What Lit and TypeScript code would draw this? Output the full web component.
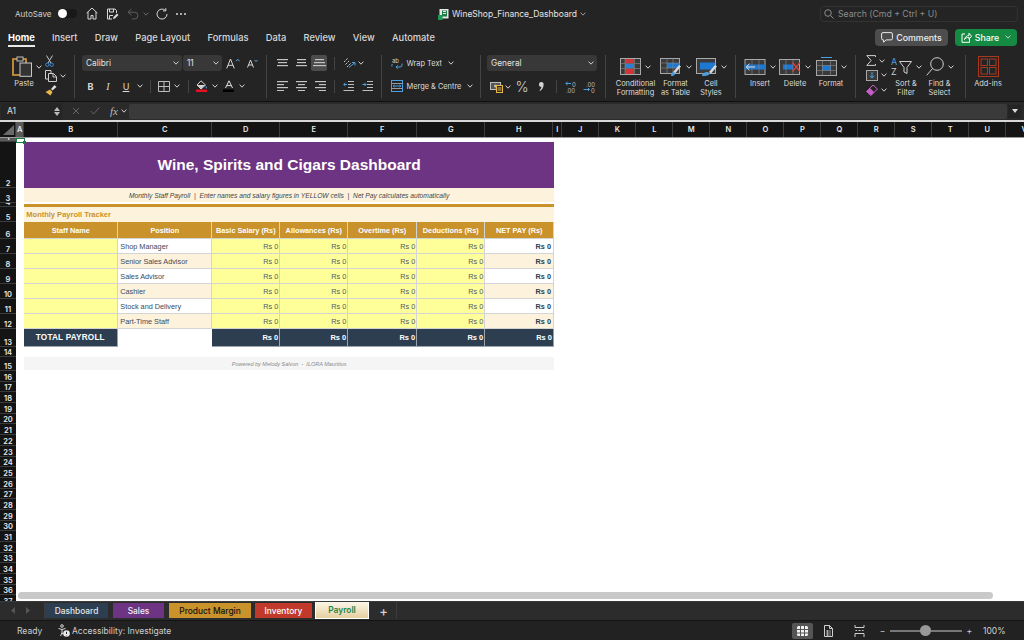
import { LitElement, html, svg, css } from "lit";
import { customElement } from "lit/decorators.js";

const chev = html`<svg class="chev" width="6" height="4" viewBox="0 0 6 4"><path d="M.6.6 3 3.2 5.4.6" fill="none" stroke="#d0d0d0" stroke-width="1"/></svg>`;

const ic = {
  home: html`<svg width="12" height="13" viewBox="0 0 12 13" fill="none" stroke="#d8d8d8"><path d="M.7 6 6 1l5.300 5M2 5v7h3V8.500h2V12h3V5"/></svg>`,
  save: html`<svg width="13" height="12" viewBox="0 0 13 12" fill="none" stroke="#d8d8d8"><path d="M10.500 5V2.500L9 1H1.500v10H6M3.500 1v3h4V1M3.500 11V7.500H7"/><path d="M7 11l.5-2 3.500-3.500 1.500 1.500L9 10.500z" fill="#d8d8d8" stroke="none"/></svg>`,
  undo: html`<svg width="12" height="12" viewBox="0 0 12 12" fill="none" stroke="#5f5f5f"><path d="M4.500 1 1 4.200l3.500 3M1 4.200h6.500a3.400 3.400 0 0 1 0 6.800H5"/></svg>`,
  redo: html`<svg width="12" height="12" viewBox="0 0 12 12" fill="none" stroke="#d8d8d8"><path d="M9.500 2.500A5 5 0 1 0 11 6M9.800.2v2.700H7"/></svg>`,
  more: html`<svg width="10" height="2" viewBox="0 0 10 2" fill="#d8d8d8"><circle cx="1" cy="1" r="1"/><circle cx="5" cy="1" r="1"/><circle cx="9" cy="1" r="1"/></svg>`,
  doc: html`<svg width="11" height="12" viewBox="0 0 11 12"><rect x="1.500" y="1" width="9" height="9.500" fill="#e6e6e6"/><rect x="4" y="2.500" width="5" height="6" fill="#1f7a45"/><path d="M0 7h4.500v5H0z" fill="#1d9a55"/><path d="M5 3.500h3M5 5.500h3" stroke="#e6e6e6"/></svg>`,
  search: html`<svg width="10" height="10" viewBox="0 0 10 10" fill="none" stroke="#8c8c8c"><circle cx="4" cy="4" r="3.300"/><path d="M6.500 6.500 9.500 9.500"/></svg>`,
  comment: html`<svg width="12" height="11" viewBox="0 0 12 11" fill="none" stroke="#e8e8e8"><path d="M2 .6h8A1.400 1.400 0 0 1 11.400 2v4.500A1.400 1.400 0 0 1 10 7.900H5L2.600 10.300V7.900H2A1.400 1.400 0 0 1 .6 6.500V2A1.400 1.400 0 0 1 2 .6z"/></svg>`,
  share: html`<svg width="11" height="11" viewBox="0 0 11 11" fill="none" stroke="#fff"><path d="M4 2H1v8.300h7.500V7"/><path d="M3.500 7.500C4 5 6 3.500 8 3.500V1.200l2.500 3-2.500 3V5.300C6 5.300 4.500 6 3.500 7.500z"/></svg>`,
  paste: html`<svg width="21" height="21" viewBox="0 0 21 21" fill="none"><path d="M6 3H1v16h8M10 3h4v4" stroke="#e3a23c" stroke-width="1.600"/><rect x="5" y="1" width="6" height="4" stroke="#bdbdbd" fill="#2a2a2a"/><rect x="8" y="7" width="11.500" height="13.300" stroke="#c8c8c8" fill="#333"/></svg>`,
  cut: html`<svg width="9" height="12" viewBox="0 0 9 12" fill="none"><path d="M1.500 .5 6 8M7.500 .5 3 8" stroke="#c8c8c8"/><circle cx="2.300" cy="9.700" r="1.700" stroke="#3a8fd8"/><circle cx="6.700" cy="9.700" r="1.700" stroke="#3a8fd8"/></svg>`,
  copy: html`<svg width="12" height="12" viewBox="0 0 12 12" fill="none" stroke="#cfcfcf"><path d="M3 9H.5V.5H6V3"/><path d="M3.500 3.500h5l3 3v5h-8z"/><path d="M8 3.500V7h3.500"/></svg>`,
  painter: html`<svg width="12" height="12" viewBox="0 0 12 12"><path d="M.5 8 5 5.500 7.500 8l-2 3.500z" fill="#e8b74a"/><path d="M6 5l3.500-4L11.500 3 7.500 6.500z" fill="#ddd"/></svg>`,
  aUp: html`<svg width="14" height="11" viewBox="0 0 14 11" fill="none"><path d="M.7 10.500 4.500 1l3.800 9.500M2 7.300h5" stroke="#d8d8d8"/><path d="M10 3.300l1.800-2 1.800 2" stroke="#5aa7e0"/></svg>`,
  aDown: html`<svg width="11" height="9" viewBox="0 0 11 9" fill="none"><path d="M.5 8.500 3.500 1l3 7.500M1.600 6h3.800" stroke="#d8d8d8"/><path d="M7.500 1l1.500 1.600L10.500 1" stroke="#5aa7e0"/></svg>`,
  border: html`<svg width="12" height="11" viewBox="0 0 12 11" fill="none" stroke="#bdbdbd"><path d="M.5.500h11v10H.5zM6 .5v10M.5 5.500h11"/></svg>`,
  fill: html`<svg width="12" height="12" viewBox="0 0 12 12"><path d="M5 .8 9.500 5 5 9 1 5z" fill="none" stroke="#d8d8d8"/><path d="M1.500 5h7.500L5 8.500z" fill="#d8d8d8"/><path d="M10 6c1 1.300 1.200 2 .5 2.500S9.200 7.500 10 6z" fill="#4aa0e0"/><rect y="9.500" width="11" height="2.500" fill="#e81123"/></svg>`,
  fontColor: html`<svg width="12" height="12" viewBox="0 0 12 12"><path d="M2.500 8 6 .8 9.500 8M3.800 5.600h4.400" fill="none" stroke="#e0e0e0"/><rect y="9.500" width="11" height="2.500" fill="#000"/></svg>`,
  orient: html`<svg width="13" height="12" viewBox="0 0 13 12" fill="none"><path d="M1 5l4-4M2.500 7.500l4-4M4 10l4-4" stroke="#cfcfcf" stroke-dasharray="2 1"/><path d="M6 10.500l6-5M12 8.500V5.500H9" stroke="#4aa0e0"/></svg>`,
  indentL: html`<svg width="11" height="10" viewBox="0 0 11 10" fill="none"><path d="M5 .5h6M5 3.500h6M5 6.500h6M.5 9.500h10.500" stroke="#bdbdbd"/><path d="M4 3.500H.7M2.300 2 .7 3.500 2.300 5" stroke="#4aa0e0"/></svg>`,
  indentR: html`<svg width="11" height="10" viewBox="0 0 11 10" fill="none"><path d="M5 .5h6M5 3.500h6M5 6.500h6M.5 9.500h10.500" stroke="#bdbdbd"/><path d="M.5 3.500H4M2.500 2 4 3.500 2.500 5" stroke="#4aa0e0"/></svg>`,
  wrap: html`<svg width="12" height="12" viewBox="0 0 12 12" fill="none"><text x="1" y="5.500" fill="#cfcfcf" font-size="6" font-family="Inter">ab</text><path d="M1.500 7a2 2 0 0 0-.5 2.500M11 6.500v1.500a2 2 0 0 1-2 2H5M6.800 8.300 5 10l1.800 1.700" stroke="#4aa0e0"/></svg>`,
  merge: html`<svg width="12" height="12" viewBox="0 0 12 12" fill="none"><rect x=".5" y=".5" width="11" height="11" stroke="#4aa0e0"/><path d="M.5 3.500h11M.5 8.500h11" stroke="#9a9a9a"/><path d="M2 6h8M3.500 4.800 2.200 6l1.300 1.200M8.500 4.800 9.800 6 8.500 7.200" stroke="#4aa0e0"/></svg>`,
  currency: html`<svg width="13" height="12" viewBox="0 0 13 12"><rect x=".5" y="1.500" width="10" height="7" fill="#555" stroke="#bdbdbd"/><circle cx="5.500" cy="5" r="1.500" fill="#bdbdbd"/><rect x="6.500" y="4.500" width="6" height="7" fill="#2a2a2a" stroke="#e8b74a"/><path d="M7.500 7h4M7.500 9h4" stroke="#e8b74a"/></svg>`,
  comma: html`<svg width="5" height="9" viewBox="0 0 5 9"><path d="M2.300 0a2.300 2.300 0 0 1 2.300 2.500C4.600 5.500 3 8 .9 9l-.4-.6C1.700 7.300 2.300 6 2.400 4.800 1 5 0 3.900 0 2.400A2.300 2.300 0 0 1 2.300 0z" fill="#d4d4d4"/></svg>`,
  decUp: html`<svg width="13" height="12" viewBox="0 0 13 12" fill="none"><path d="M6 2.500H.8M2.500 1 .8 2.500 2.500 4" stroke="#4aa0e0"/><text x="7" y="5.500" fill="#bdbdbd" font-size="6" font-family="Inter">0</text><text x="1" y="11.500" fill="#bdbdbd" font-size="6" font-family="Inter">.00</text></svg>`,
  decDown: html`<svg width="13" height="12" viewBox="0 0 13 12" fill="none"><text x="3" y="5.500" fill="#bdbdbd" font-size="6" font-family="Inter">.00</text><path d="M.5 8.500h6M5 7l1.500 1.500L5 10" stroke="#4aa0e0"/><text x="8" y="11.500" fill="#bdbdbd" font-size="6" font-family="Inter">0</text></svg>`,
  condFmt: html`<svg width="21" height="17" viewBox="0 0 21 17"><rect x=".5" y=".5" width="20" height="16" fill="#3a3a3a" stroke="#a8a8a8"/><path d="M5 1h9v4H5z" fill="#d13438"/><path d="M5 6h9v4H5z" fill="#2f7fd0"/><path d="M5 11h9v5H5z" fill="#d13438"/><path d="M1 5.500h19M1 10.500h19M5 1v15M14.500 1v15" stroke="#8a8a8a" stroke-width=".6"/></svg>`,
  fmtTable: html`<svg width="22" height="18" viewBox="0 0 22 18" fill="none"><rect x=".5" y=".5" width="19" height="15" fill="#3a3a3a" stroke="#a8a8a8"/><path d="M7 5h12.500v5H7z" fill="#1e78d0"/><path d="M.5 5h19M.5 10h19M7 .5v15M13 .5v15" stroke="#8a8a8a" stroke-width=".6"/><path d="M13 14l6-7 2 1.500-6 7z" fill="#d8d8d8"/><path d="M11 18c0-3 1-4 3-4l1 1.500c0 2-2 2.500-4 2.500z" fill="#4aa0e0"/></svg>`,
  cellStyle: html`<svg width="21" height="18" viewBox="0 0 21 18" fill="none"><rect x=".5" y=".5" width="19" height="15" fill="#3a3a3a" stroke="#a8a8a8"/><path d="M4 4.500h15v7H4z" fill="#1e78d0"/><path d="M13 14l6-7 2 1.500-6 7z" fill="#d8d8d8"/><path d="M6 18c0-3 3-4 6-4l1.500 1.500c0 2-4 2.500-7.500 2.500z" fill="#4aa0e0"/></svg>`,
  insert: html`<svg width="22" height="16" viewBox="0 0 22 16" fill="none"><rect x="1" y=".5" width="20" height="15" fill="#3a3a3a" stroke="#a8a8a8"/><path d="M.5 5.500h21v5H.5z" fill="#1e78d0"/><path d="M11 8H2.500M5.500 4.800 2.200 8l3.300 3.200" stroke="#e8e8e8"/><path d="M8 1v14M15 1v14" stroke="#8a8a8a" stroke-width=".6"/></svg>`,
  del: html`<svg width="22" height="16" viewBox="0 0 22 16" fill="none"><rect x=".5" y=".5" width="20" height="15" fill="#3a3a3a" stroke="#a8a8a8"/><path d="M4 5.500h10v5H4z" fill="#1e78d0"/><path d="M7 1v14M14 1v14" stroke="#8a8a8a" stroke-width=".6"/><path d="M13.500 3.500 21 12.500M21 3.500l-7.500 9" stroke="#e0433a" stroke-width="1.200"/></svg>`,
  format: html`<svg width="21" height="19" viewBox="0 0 21 19" fill="none"><path d="M5 .5h11" stroke="#4aa0e0"/><rect x=".5" y="3.500" width="20" height="15" fill="#3a3a3a" stroke="#a8a8a8"/><path d="M6 8.500h9v5H6z" fill="#1e78d0"/><path d="M.5 8.500h20M.5 13.500h20M6.500 3.500v15M14.500 3.500v15" stroke="#8a8a8a" stroke-width=".6"/></svg>`,
  sum: html`<svg width="10" height="11" viewBox="0 0 10 11" fill="none" stroke="#cfcfcf"><path d="M9.500 2V.6H.8l4.400 4.900-4.400 4.900h8.700V9"/></svg>`,
  fillDown: html`<svg width="12" height="11" viewBox="0 0 12 11" fill="none"><rect x=".5" y=".5" width="11" height="10" fill="#3a3a3a" stroke="#a8a8a8"/><path d="M6 2v6M3.800 5.800 6 8l2.200-2.200" stroke="#4aa0e0"/></svg>`,
  eraser: html`<svg width="12" height="12" viewBox="0 0 12 12"><path d="M.5 7.500 7 1l4.500 4-6.500 6.500z" fill="none" stroke="#c45fc8"/><path d="M.5 7.500 4 4l4 4-3 3.500z" fill="#c45fc8"/></svg>`,
  sort: html`<svg width="21" height="19" viewBox="0 0 21 19" fill="none"><text x="0" y="8" fill="#4aa0e0" font-size="9" font-family="Inter">A</text><text x="0" y="18" fill="#d0d0d0" font-size="9" font-family="Inter">Z</text><path d="M8.500 4.500h12L16 10.500v6l-3-1.500v-4.500z" stroke="#d0d0d0"/></svg>`,
  find: html`<svg width="18" height="19" viewBox="0 0 18 19" fill="none" stroke="#d0d0d0"><circle cx="11" cy="7" r="6.300"/><path d="M6.500 11.500.7 18.300"/></svg>`,
  addins: html`<svg width="21" height="21" viewBox="0 0 21 21" fill="none" stroke="#a8391f"><rect x=".5" y=".5" width="20" height="20"/><rect x="3" y="3" width="6.500" height="6.500"/><rect x="11.500" y="3" width="6.500" height="6.500"/><rect x="3" y="11.500" width="6.500" height="6.500"/><rect x="11.500" y="11.500" width="6.500" height="6.500"/></svg>`,
  access: html`<svg width="12" height="13" viewBox="0 0 12 13" fill="none"><circle cx="4" cy="2" r="1.300" stroke="#d8d8d8"/><path d="M.5 4.500 4 5.500l3.500-1M4 5.500v3M4 8.500 2.500 12M4 8.500l1 2" stroke="#d8d8d8"/><circle cx="8.500" cy="9.500" r="3.300" fill="#e8e8e8"/><path d="M8.500 7.800v2.200M8.500 11v.4" stroke="#222"/></svg>`,
  gridView: html`<svg width="11" height="10" viewBox="0 0 11 10" fill="#f2f2f2"><path d="M0 1.500A1.500 1.500 0 0 1 1.500 0H3v3H0zM4 0h3v3H4zM8 0h1.500A1.500 1.500 0 0 1 11 1.500V3H8zM0 4h3v2.500H0zM4 4h3v2.500H4zM8 4h3v2.500H8zM0 7.500h3V10H1.500A1.500 1.500 0 0 1 0 8.500zM4 7.500h3V10H4zM8 7.500h3v1A1.500 1.500 0 0 1 9.500 10H8z"/></svg>`,
  pageView: html`<svg width="9" height="12" viewBox="0 0 9 12" fill="none" stroke="#cfcfcf"><path d="M.5.500h5l3 3v8h-8zM5.500.500v3h3"/><path d="M2 6h5M2 8h5M2 10h5M3.500 5v6" stroke-width=".7"/></svg>`,
  breakView: html`<svg width="11" height="12" viewBox="0 0 11 12" fill="none" stroke="#cfcfcf"><path d="M1 0v2.500h9V0M1 12V8.500h9V12M1.500 5.500h1.500M4.500 5.500h2M8 5.500h1.500"/></svg>`,
};

// the alignment buttons are just stacks of bars
const bars = (ws: number[], align: "l" | "c" | "r", gap = 3) => {
  const total = Math.max(...ws);
  const h = (ws.length - 1) * gap + 1.2;
  return html`<svg width=${total} height=${h} viewBox="0 0 ${total} ${h}">
    ${ws.map((w, i) => {
      const x = align === "l" ? 0 : align === "c" ? (total - w) / 2 : total - w;
      return svg`<rect x=${x} y=${i * gap} width=${w} height="1.200" fill="#c4c4c4"></rect>`;
    })}
  </svg>`;
};

const rowHeights = [4, 46, 15, 4, 15, 17, 15, 15, 15, 15, 15, 15, 18, 10, 14, ...Array(22).fill(10.7)];
const colLetters = ["A", "B", "C", "D", "E", "F", "G", "H", "I", "J", "K", "L", "M", "N", "O", "P", "Q", "R", "S", "T", "U", "V"];
const positions = ["Shop Manager", "Senior Sales Advisor", "Sales Advisor", "Cashier", "Stock and Delivery", "Part-Time Staff"];
const amounts = ["Basic Salary (Rs)", "Allowances (Rs)", "Overtime (Rs)", "Deductions (Rs)"];
const menu = ["Insert", "Draw", "Page Layout", "Formulas", "Data", "Review", "View", "Automate"];
const sheets = [
  { name: "Dashboard", cls: "navy" },
  { name: "Sales", cls: "purple" },
  { name: "Product Margin", cls: "gold" },
  { name: "Inventory", cls: "red" },
  { name: "Payroll", cls: "current" },
];

@customElement("app-root")
export class AppRoot extends LitElement {
  static styles = css`
    :host {
      display: block;
      width: 1024px;
      height: 640px;
      overflow: hidden;
      font-family: Inter, "Liberation Sans", sans-serif;
      color: #e0e0e0;
      background: #242424;
    }
    * { box-sizing: border-box; }
    svg { display: block; flex: none; }
    .app { display: flex; flex-direction: column; height: 640px; }

    .title {
      height: 27px;
      display: grid;
      grid-template-columns: 1fr auto 1fr;
      align-items: center;
      font-size: 8.500px;
    }
    .quick { display: flex; align-items: center; padding-left: 15px; }
    .quick .label { width: 43px; color: #cfcfcf; font-size: 8.100px; }
    .toggle { width: 19px; height: 9px; border-radius: 5px; background: #181818; margin-right: 9px; }
    .toggle::before { content: ""; display: block; width: 9px; height: 9px; border-radius: 50%; background: #fff; }
    .quick svg { margin-right: 8px; }
    .quick .chev { margin: 0 7px 0 -4px; opacity: .4; }
    .doc { display: flex; align-items: center; gap: 3px; font-size: 8.500px; color: #e4e4e4; }
    .doc .chev { margin-left: 0; opacity: .7; }
    .search {
      justify-self: end;
      margin-right: 6px;
      width: 198px;
      height: 16px;
      display: flex;
      align-items: center;
      gap: 4px;
      padding-left: 3px;
      border: 1px solid #333;
      border-radius: 4px;
      color: #8c8c8c;
      font-size: 8.700px;
    }

    .menu { height: 23px; display: flex; align-items: center; padding: 0 7px 3px 8px; font-size: 9.300px; font-weight: 500; color: #d8d8d8; gap: 17.300px; }
    .menu .home { font-weight: 700; color: #fff; position: relative; }
    .menu .home::after { content: ""; position: absolute; left: 0; right: 0; bottom: -4px; height: 1.500px; background: #e8e8e8; }
    .actions { margin-left: auto; display: flex; gap: 7px; font-weight: 500; font-size: 8.800px; }
    .btn { height: 17px; display: flex; align-items: center; justify-content: center; gap: 3px; border-radius: 4px; color: #eee; }
    .btn.comments { width: 73px; background: #4d4d4d; }
    .btn.share { width: 62px; background: #148a42; color: #fff; }
    .btn .chev { margin-left: 3px; }

    .ribbon { height: 51px; padding: 5px 0 3px; display: flex; font-size: 7.400px; color: #dcdcdc; }
    .group { height: 43px; border-right: 1px solid #444; display: flex; flex: none; }
    .g-clip { width: 75px; padding-left: 12px; }
    .g-font { width: 192px; padding-left: 7px; flex-direction: column; gap: 7px; }
    .g-align { width: 115px; padding-left: 5px; flex-direction: column; gap: 7px; }
    .g-wrap { width: 99px; padding-left: 9px; flex-direction: column; gap: 7px; }
    .g-num { width: 125px; padding-left: 6px; flex-direction: column; gap: 7px; }
    .g-styles { width: 130px; padding-left: 9px; }
    .g-cells { width: 120px; padding-left: 6px; }
    .g-edit { width: 110px; padding-left: 10px; }
    .g-add { width: 59px; border: 0; }

    .paste { width: 33px; display: flex; flex-direction: column; }
    .paste .top { display: flex; align-items: center; gap: 3px; height: 23px; }
    .paste .cap { width: 24px; text-align: center; margin-top: 1px; line-height: 9px; }
    .stack { display: flex; flex-direction: column; justify-content: space-between; height: 41px; }
    .stack > div { display: flex; align-items: center; gap: 3px; }

    .line { height: 16px; display: grid; align-items: center; justify-items: center; }
    .font-top { display: flex; align-items: center; height: 16px; }
    .select { height: 16px; display: flex; align-items: center; justify-content: space-between; padding: 0 3px 0 4px; background: #383838; border-radius: 3px; font-size: 8.300px; color: #e4e4e4; }
    .select.name { width: 100px; margin-right: 1px; }
    .select.size { width: 39px; margin-right: 4px; }
    .select.fmt { width: 110px; }
    .font-top .up { margin-right: 7px; }
    .font-tools { grid-template-columns: 17px 18px 18px 10px 10px 18px 8px 14px 14px 12px 16px 10px; }
    .b { font-weight: 700; font-size: 9px; }
    .i { font-style: italic; font-family: "Liberation Serif", serif; font-size: 10px; }
    .u { text-decoration: underline; font-size: 9px; }
    .vsep { width: 1px; height: 13px; background: #444; }
    .align-top { grid-template-columns: 20px 18px 18px 12px 18px 6px; }
    .align-bottom { grid-template-columns: 20px 18px 20px 8px 20px 18px; }
    .active { width: 16px; height: 16px; background: #4c4c4c; border-radius: 2px; display: flex; align-items: center; justify-content: center; }
    .wrapline { height: 16px; display: flex; align-items: center; gap: 3.500px; }
    .wrapline .chev { margin-left: 2px; }
    .num-tools { grid-template-columns: 18px 6px 22px 16px 14px 16px 20px; }
    .pct { font-size: 14px; font-weight: 300; color: #d0d0d0; }

    .big { display: flex; flex-direction: column; align-items: center; }
    .big .top { height: 23px; display: flex; align-items: center; gap: 4px; }
    .big .cap { margin-top: 1px; text-align: center; line-height: 9px; white-space: pre-line; }
    .w41 { width: 41px; }
    .w39 { width: 39px; }
    .w32 { width: 32px; }
    .w36 { width: 36px; }
    .w34 { width: 34px; }
    .w38 { width: 38px; }
    .w35 { width: 35px; }
    .w44 { width: 44px; }
    .w24 { width: 24px; }

    .formula { height: 19px; border-top: 1px solid #111; display: flex; align-items: center; font-size: 8.500px; background: #2a2a2a; }
    .namebox { width: 61px; height: 17px; margin-left: 1px; padding: 0 2px 0 6px; display: flex; align-items: center; justify-content: space-between; background: #252525; color: #e0e0e0; }
    .step { display: flex; flex-direction: column; gap: 1px; }
    .fx-tools { width: 67px; display: flex; align-items: center; padding-left: 10px; gap: 10px; color: #666; }
    .fx { font-family: "Liberation Serif", serif; font-style: italic; font-size: 11px; color: #bbb; margin-right: -7px; }
    .input { flex: 1; height: 15px; background: #3a3a3a; border-radius: 2px; }
    .fdrop { width: 13px; height: 13px; margin: 0 3px 0 1px; background: #242424; display: flex; align-items: center; justify-content: center; }

    .sheet { flex: 1; min-height: 0; position: relative; overflow: hidden; background: #fff; border-top: 2px solid #d8d8d8; }
    .cols { height: 16px; display: grid; grid-template-columns: 16px 8.300px 94px 94px 68px 68px 69px 68px 68px 9px repeat(13, 37px); background: #141414; border-bottom: 1px solid #9a9a9a; }
    .cols > div { display: flex; align-items: center; justify-content: center; border-right: 1px solid #3c3c3c; font-size: 7.500px; font-weight: 600; color: #e8e8e8; overflow: hidden; }
    .cols .sel { background: #5a5a5a; }
    .cols .corner { background: #141414; position: relative; }
    .corner svg { position: absolute; left: 3px; top: 3px; }
    .body { display: flex; }
    .rows { width: 16px; flex: none; background: #141414; }
    .rows div { overflow: hidden; display: flex; align-items: flex-end; justify-content: center; border-bottom: 1px solid #3c3c3c; font-size: 7.500px; line-height: 6px; font-weight: 600; color: #e8e8e8; }
    .rows div:first-child { background: #5a5a5a; }

    .page { position: relative; flex: 1; padding: 4px 0 0 8.300px; }
    .selbox { position: absolute; left: 0; top: 0; width: 9px; height: 5px; border: 1px solid #1e7a45; }
    .selbox::after { content: ""; position: absolute; right: -2px; bottom: -2px; width: 3px; height: 3px; background: #1e7a45; }
    .paper { display: grid; grid-template-columns: 94px 94px 68px 68px 69px 68px 68.700px; font-family: "Liberation Sans", Arial, sans-serif; width: 529.700px; grid-template-rows: 46px 15px 4px 15px 17px repeat(6, 15px) 18px; font-size: 7.300px; }
    .paper .wide { grid-column: 1 / -1; }
    .banner { background: #6c3483; color: #fff; font-size: 15.500px; font-weight: 700; display: flex; align-items: center; justify-content: center; }
    .note { background: #fdf2dc; font-size: 6.700px; font-style: italic; color: #444; display: flex; align-items: center; justify-content: center; border-bottom: 1px solid #fff; }
    .bar { background: #c9922a; border-top: 1px solid #fff; }
    .section { background: #fdf2dc; color: #c9922a; font-size: 7.500px; font-weight: 700; display: flex; align-items: center; padding-left: 2px; }
    .cell { display: flex; align-items: center; border-right: 1px solid #d4d4d4; border-bottom: 1px solid #d4d4d4; padding: 1px 2px 0; color: #3d4a57; white-space: nowrap; }
    .head { background: #c9922a; color: #fff; font-weight: 700; justify-content: center; padding: 1px 0 0; }
    .input-cell { background: #ffff99; }
    .money { justify-content: flex-end; color: #4d5a68; padding-right: 1px; }
    .net { justify-content: flex-end; font-weight: 700; color: #2c3e50; }
    .odd { background: #fff; }
    .even { background: #fdf2dc; }
    .total { background: #2c3e50; color: #fff; font-weight: 700; font-size: 7.500px; justify-content: flex-end; padding: 0 1px 0 0; border-color: #9aa4ad; }
    .total.label { justify-content: center; font-size: 8.200px; letter-spacing: .2px; }
    .blank { background: #fff; }
    .foot { width: 529.700px; height: 13px; margin-top: 10px; background: #f5f5f5; display: flex; align-items: center; justify-content: center; font-family: "Liberation Sans", Arial, sans-serif; font-size: 5.500px; font-style: italic; color: #8a8a8a; white-space: pre; }
    .hscroll { position: absolute; left: 18px; bottom: 2px; width: 975px; height: 7px; border-radius: 4px; background: #c9c9c9; }

    .tabs { height: 19px; background: #2c2c2c; border-top: 1px solid #3a3a3a; display: flex; align-items: flex-start; font-size: 8.400px; font-weight: 500; }
    .nav { width: 45px; height: 17px; display: flex; align-items: center; gap: 11px; padding-left: 11px; border-right: 1px solid #3c3c3c; }
    .tab { height: 15px; margin-top: 1px; margin-right: 5px; display: flex; align-items: center; justify-content: center; }
    .tab.navy { width: 63px; background: #2c3e50; color: #e6e6e6; }
    .tab.purple { width: 51px; background: #6c3483; color: #f0f0f0; }
    .tab.gold { width: 82px; background: #c9922a; color: #111; margin-right: 4px; }
    .tab.red { width: 57px; background: #c0392b; color: #fff; margin-right: 3px; }
    .tab.current { width: 54px; height: 17px; margin: 0; background: linear-gradient(#fbf6ea, #e6cfa0); border: 1px solid #fff; border-top: 0; color: #1e8449; font-weight: 600; }
    .plus { width: 28px; height: 17px; padding-left: 2px; display: flex; align-items: center; justify-content: center; font-size: 13px; color: #d0d0d0; border-right: 1px solid #3c3c3c; }

    .status { height: 20px; background: #222; border-top: 1px solid #151515; display: flex; align-items: center; font-size: 8.500px; color: #cfcfcf; padding-left: 17px; }
    .status .ready { width: 41px; }
    .status .acc { display: flex; align-items: center; gap: 2px; }
    .views { margin-left: auto; display: flex; align-items: center; padding-right: 17px; }
    .viewbtn { width: 21px; height: 16px; background: #555; border-radius: 2px; display: flex; align-items: center; justify-content: center; margin-right: 11px; }
    .views .pg { margin-right: 21px; }
    .views .br { margin-right: 15px; }
    .slider { width: 72px; height: 2px; background: #777; position: relative; margin: 0 4px 0 5px; }
    .slider::after { content: ""; position: absolute; left: 30px; top: -5px; width: 11px; height: 11px; border-radius: 50%; background: #999; }
    .zoomlabel { margin-left: 11px; width: 24px; }
  `;

  private renderRibbon() {
    return html`
      <div class="ribbon">
        <div class="group g-clip">
          <div class="paste">
            <div class="top">${ic.paste}${chev}</div>
            <div class="cap">Paste</div>
          </div>
          <div class="stack">
            <div>${ic.cut}</div>
            <div>${ic.copy}${chev}</div>
            <div>${ic.painter}</div>
          </div>
        </div>
        <div class="group g-font">
          <div class="font-top">
            <div class="select name">Calibri ${chev}</div>
            <div class="select size">11 ${chev}</div>
            <span class="up">${ic.aUp}</span>
            ${ic.aDown}
          </div>
          <div class="line font-tools">
            <span class="b">B</span><span class="i">I</span><span class="u">U</span>${chev}
            <span class="vsep"></span>${ic.border}${chev}
            <span class="vsep"></span>${ic.fill}${chev}${ic.fontColor}${chev}
          </div>
        </div>
        <div class="group g-align">
          <div class="line align-top">
            ${bars([11, 9, 11], "c")}${bars([9, 9, 11], "c")}
            <span class="active">${bars([9, 11, 13], "c")}</span>
            <span class="vsep"></span>${ic.orient}${chev}
          </div>
          <div class="line align-bottom">
            ${bars([11, 7, 11, 7], "l")}${bars([11, 7, 11, 7], "c")}${bars([11, 7, 11, 7], "r")}
            <span class="vsep"></span>${ic.indentL}${ic.indentR}
          </div>
        </div>
        <div class="group g-wrap">
          <div class="wrapline">${ic.wrap}<span>Wrap Text</span>${chev}</div>
          <div class="wrapline">${ic.merge}<span>Merge &amp; Centre</span>${chev}</div>
        </div>
        <div class="group g-num">
          <div class="select fmt">General ${chev}</div>
          <div class="line num-tools">
            ${ic.currency}${chev}<span class="pct">%</span>${ic.comma}
            <span class="vsep"></span>${ic.decUp}${ic.decDown}
          </div>
        </div>
        <div class="group g-styles">
          ${this.big(ic.condFmt, "Conditional\nFormatting", "w41")}
          ${this.big(ic.fmtTable, "Format\nas Table", "w39")}
          ${this.big(ic.cellStyle, "Cell\nStyles", "w32")}
        </div>
        <div class="group g-cells">
          ${this.big(ic.insert, "Insert", "w36")}
          ${this.big(ic.del, "Delete", "w34")}
          ${this.big(ic.format, "Format", "w38")}
        </div>
        <div class="group g-edit">
          <div class="stack w24">
            <div>${ic.sum}${chev}</div>
            <div>${ic.fillDown}${chev}</div>
            <div>${ic.eraser}${chev}</div>
          </div>
          ${this.big(ic.sort, "Sort &\nFilter", "w32")}
          ${this.big(ic.find, "Find &\nSelect", "w35")}
        </div>
        <div class="group g-add">${this.big(ic.addins, "Add-ins", "w44", false)}</div>
      </div>
    `;
  }

  private big(icon: unknown, label: string, width: string, hasMenu = true) {
    return html`
      <div class="big ${width}">
        <div class="top">${icon}${hasMenu ? chev : ""}</div>
        <div class="cap">${label}</div>
      </div>
    `;
  }

  private renderSheet() {
    return html`
      <div class="sheet">
        <div class="cols">
          <div class="corner"><svg width="11" height="10" viewBox="0 0 11 10"><path d="M11 0v10H0z" fill="#6a6a6a"/></svg></div>
          ${colLetters.map((c) => html`<div class=${c === "A" ? "sel" : ""}>${c}</div>`)}
        </div>
        <div class="body">
          <div class="rows">
            ${rowHeights.map((h, i) => html`<div style="height:${h}px">${i + 1}</div>`)}
          </div>
          <div class="page">
            <div class="selbox"></div>
            <div class="paper">
              <div class="banner wide">Wine, Spirits and Cigars Dashboard</div>
              <div class="note wide">Monthly Staff Payroll &nbsp;|&nbsp; Enter names and salary figures in YELLOW cells &nbsp;|&nbsp; Net Pay calculates automatically</div>
              <div class="bar wide"></div>
              <div class="section wide">Monthly Payroll Tracker</div>
              <div class="cell head">Staff Name</div>
              <div class="cell head">Position</div>
              ${amounts.map((a) => html`<div class="cell head">${a}</div>`)}
              <div class="cell head">NET PAY (Rs)</div>
              ${positions.map((p, i) => {
                const tone = i % 2 ? "even" : "odd";
                return html`
                  <div class="cell input-cell"></div>
                  <div class="cell ${tone}">${p}</div>
                  ${amounts.map(() => html`<div class="cell input-cell money">Rs 0</div>`)}
                  <div class="cell net ${tone}">Rs 0</div>
                `;
              })}
              <div class="cell total label">TOTAL PAYROLL</div>
              <div class="blank"></div>
              ${[...amounts, "net"].map(() => html`<div class="cell total">Rs 0</div>`)}
            </div>
            <div class="foot">Powered by Melody Salvon  -  ILORA Mauritius</div>
          </div>
        </div>
        <div class="hscroll"></div>
      </div>
    `;
  }

  render() {
    return html`
      <div class="app">
        <div class="title">
          <div class="quick">
            <span class="label">AutoSave</span>
            <span class="toggle"></span>
            ${ic.home}${ic.save}${ic.undo}${chev}${ic.redo}${ic.more}
          </div>
          <div class="doc">${ic.doc}<span>WineShop_Finance_Dashboard</span>${chev}</div>
          <div class="search">${ic.search}<span>Search (Cmd + Ctrl + U)</span></div>
        </div>
        <div class="menu">
          <span class="home">Home</span>
          ${menu.map((m) => html`<span>${m}</span>`)}
          <div class="actions">
            <div class="btn comments">${ic.comment}<span>Comments</span></div>
            <div class="btn share">${ic.share}<span>Share</span>${chev}</div>
          </div>
        </div>
        ${this.renderRibbon()}
        <div class="formula">
          <div class="namebox">
            <span>A1</span>
            <span class="step">
              <svg width="6" height="4" viewBox="0 0 6 4"><path d="M3 0l3 4H0z" fill="#bbb"/></svg>
              <svg width="6" height="4" viewBox="0 0 6 4"><path d="M3 4 0 0h6z" fill="#bbb"/></svg>
            </span>
          </div>
          <div class="fx-tools">
            <svg width="8" height="8" viewBox="0 0 8 8" stroke="#666"><path d="M1 1l6 6M7 1 1 7"/></svg>
            <svg width="10" height="8" viewBox="0 0 10 8" fill="none" stroke="#666"><path d="M.7 4 3.500 7 9.300 .7"/></svg>
            <span class="fx">fx</span>${chev}
          </div>
          <div class="input"></div>
          <div class="fdrop"><svg width="6" height="4" viewBox="0 0 6 4"><path d="M3 4 0 0h6z" fill="#ddd"/></svg></div>
        </div>
        ${this.renderSheet()}
        <div class="tabs">
          <div class="nav">
            <svg width="4" height="7" viewBox="0 0 4 7"><path d="M4 0v7L0 3.500z" fill="#555"/></svg>
            <svg width="4" height="7" viewBox="0 0 4 7"><path d="M0 0v7l4-3.500z" fill="#555"/></svg>
          </div>
          ${sheets.map((s) => html`<div class="tab ${s.cls}">${s.name}</div>`)}
          <div class="plus">+</div>
        </div>
        <div class="status">
          <span class="ready">Ready</span>
          <span class="acc">${ic.access}Accessibility: Investigate</span>
          <div class="views">
            <div class="viewbtn">${ic.gridView}</div>
            <span class="pg">${ic.pageView}</span>
            <span class="br">${ic.breakView}</span>
            <span>−</span>
            <div class="slider"></div>
            <span>+</span>
            <span class="zoomlabel">100%</span>
          </div>
        </div>
      </div>
    `;
  }
}
